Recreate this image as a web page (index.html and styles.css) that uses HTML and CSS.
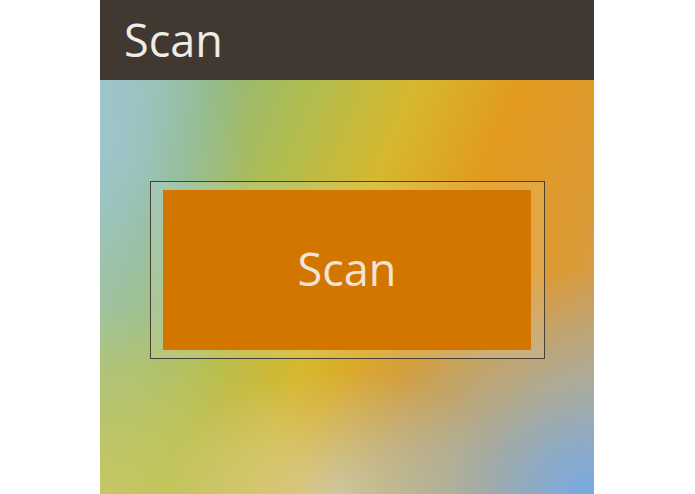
FILE: index.html
```html
<!DOCTYPE html>
<html>
<head>
<meta charset="utf-8">
<link rel="stylesheet" href="styles.css">
</head>
<body>
<div class="panel">
  <header class="bar"><h1 class="title">Scan</h1></header>
  <main class="content">
    <div class="frame">
      <button class="scan-btn">Scan</button>
    </div>
  </main>
</div>
</body>
</html>
```
FILE: styles.css
```css
html, body { margin: 0; padding: 0; background: #ffffff; }
body { font-family: "Open Sans", "DejaVu Sans", sans-serif; }
.panel {
  width: 494px;
  height: 494px;
  margin-left: 100px;
  display: flex;
  flex-direction: column;
}
.bar {
  height: 80px;
  background: #403831;
  display: flex;
  align-items: center;
  padding-left: 24px;
  flex: none;
}
.title {
  margin: 0;
  font-weight: 500;
  font-size: 45px;
  color: #efebe7;
  line-height: 1;
  margin-top: -2px;
}
.content {
  flex: 1;
  padding-top: 101px;
  padding-left: 50px;
  background:
    radial-gradient(ellipse 60% 55% at 100% 100%, rgba(118,170,228,1) 0%, rgba(150,180,200,0.6) 50%, rgba(150,180,200,0) 100%),
    radial-gradient(ellipse 35% 30% at 48% 100%, rgba(214,208,160,0.9) 0%, rgba(214,208,160,0) 100%),
    radial-gradient(ellipse 45% 45% at 0% 100%, rgba(200,200,100,0.95) 0%, rgba(200,200,100,0.5) 55%, rgba(200,200,100,0) 100%),
    radial-gradient(ellipse 30% 55% at 0% 15%, rgba(158,198,208,0.9) 0%, rgba(158,198,208,0) 100%),
    radial-gradient(ellipse 25% 35% at 0% 62%, rgba(172,200,152,0.6) 0%, rgba(172,200,152,0) 100%),
    linear-gradient(112deg, #9cc4c4 0%, #92b97c 17%, #b0bd50 32%, #d6b82e 48%, #e29a1e 64%, #dc9a36 82%, #c4a270 100%);
}
.frame {
  width: 368px;
  height: 160px;
  border: 1px solid #4a4136;
  padding: 8px 13px 8px 12px;
  background: rgba(255,255,255,0.12);
}
.scan-btn {
  width: 100%;
  height: 100%;
  border: none;
  margin: 0;
  padding: 0;
  background: #d27600;
  color: #f1e4d6;
  font-family: "Open Sans", "DejaVu Sans", sans-serif;
  font-size: 45px;
  font-weight: 400;
  display: flex;
  align-items: center;
  justify-content: center;
  padding-bottom: 4px;
}
```
